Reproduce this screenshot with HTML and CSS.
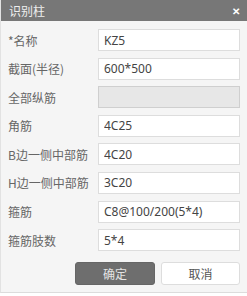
FILE: index.html
```html
<!DOCTYPE html>
<html lang="zh">
<head>
  <meta charset="UTF-8" />
  <title>识别柱</title>
  <link rel="stylesheet" href="styles.css">
</head>
<body>
  <div class="dialog">
    <!-- Title bar -->
    <div class="title-bar">
      <span>识别柱</span>
      <span class="close">✕</span>
    </div>

    <!-- Column fields -->
    <div class="form">
      <div class="row"><label>*名称</label><input type="text" value="KZ5"></div>
      <div class="row"><label>截面(半径)</label><input type="text" value="600*500"></div>
      <div class="row"><label>全部纵筋</label><input type="text" class="disabled" value=""></div>
      <div class="row"><label>角筋</label><input type="text" value="4C25"></div>
      <div class="row"><label>B边一侧中部筋</label><input type="text" value="4C20"></div>
      <div class="row"><label>H边一侧中部筋</label><input type="text" value="3C20"></div>
      <div class="row"><label>箍筋</label><input type="text" value="C8@100/200(5*4)"></div>
      <div class="row"><label>箍筋肢数</label><input type="text" value="5*4"></div>

      <div class="buttons">
        <button class="primary">确定</button>
        <button>取消</button>
      </div>
    </div>
  </div>
</body>
</html>
```

FILE: styles.css
```css
* { box-sizing: border-box; }
html, body {
  margin: 0;
  padding: 0;
  background: #fff;
  font-family: "Noto Sans CJK SC", "Noto Sans", sans-serif;
}

/* Dialog frame */
.dialog {
  width: 247px;
  height: 293px;
  background: #f5f5f5;
  border-left: 1px solid #e2e2e2;
  border-bottom: 1px solid #dcdcdc;
}

.title-bar {
  height: 21px;
  background: #777;
  color: #eee;
  font-size: 12px;
  display: flex;
  align-items: center;
  justify-content: space-between;
  padding: 0 7px 0 8px;
}
.title-bar .close {
  font-size: 10px;
  font-weight: bold;
  color: #fff;
}

/* Rows */
.form {
  padding: 8px 7px 0 7px;
  display: flex;
  flex-direction: column;
  gap: 6.6px;
}
.row {
  display: flex;
  align-items: center;
  height: 22px;
}
.row label {
  width: 90px;
  font-size: 12px;
  color: #666;
}
.row input {
  width: 142px;
  height: 22px;
  border: 1px solid #ddd;
  background: #fff;
  padding: 0 5px;
  font-family: "Noto Sans", sans-serif;
  font-size: 12px;
  color: #444;
  outline: none;
}
.row input.disabled {
  background: #e7e7e7;
  border-color: #cfcfcf;
}

/* Buttons */
.buttons {
  display: flex;
  justify-content: flex-end;
  gap: 6px;
  margin-top: 4.4px;
}
.buttons button {
  width: 79px;
  height: 23px;
  border: 1px solid #ddd;
  border-radius: 3px;
  background: #fff;
  color: #555;
  font-family: "Noto Sans CJK SC", sans-serif;
  font-size: 12px;
  padding: 0;
}
.buttons .primary {
  width: 80px;
  background: #6e6e6e;
  border-color: #666;
  color: #e4e4e4;
}
```
